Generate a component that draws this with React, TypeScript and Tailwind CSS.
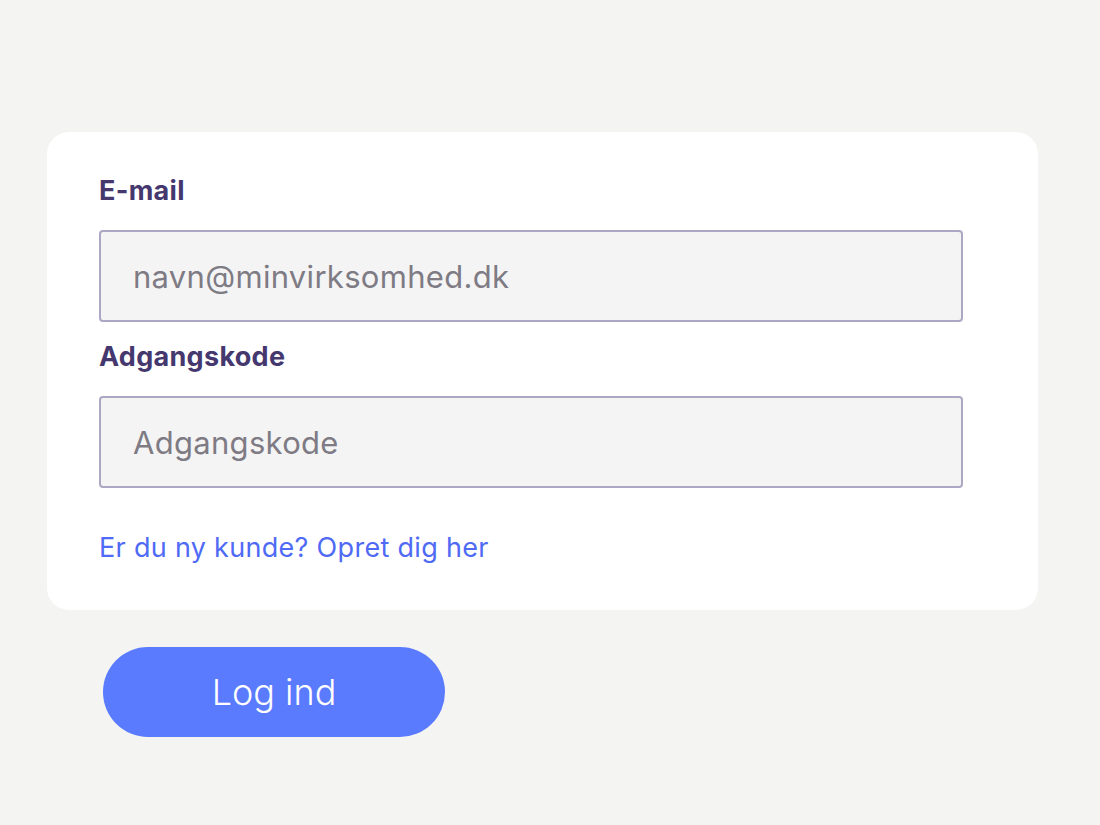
import React from 'react'

const font = { fontFamily: 'Inter, "Open Sans", sans-serif' }

const Field = ({ label, placeholder, type }: { label: string; placeholder: string; type: string }) => (
  <div>
    <label className="block text-[27px] font-bold leading-[30px] tracking-[0.3px] text-[#45386f]">{label}</label>
    <input
      type={type}
      placeholder={placeholder}
      className="mt-[24px] block h-[92px] w-[864px] rounded-[4px] border-2 border-[#aca7c2] bg-[#f4f4f4] px-[32px] text-[31px] tracking-[0.3px] text-[#55515a] outline-none placeholder:text-[#7e7b84]"
    />
  </div>
)

const App: React.FC = () => {
  return (
    <div className="min-h-[825px] w-full bg-[#f4f4f2] pt-[132px] pl-[47px]" style={font}>
      <div className="w-[991px] rounded-[22px] bg-white pt-[44px] pb-[46px] pl-[52px]">
        <div className="flex flex-col gap-[20px]">
          <Field label="E-mail" placeholder="navn@minvirksomhed.dk" type="email" />
          <Field label="Adgangskode" placeholder="Adgangskode" type="password" />
        </div>
        <a href="#" className="mt-[44px] block text-[27px] leading-[32px] tracking-[0.3px] text-[#4f6af5]">
          Er du ny kunde? Opret dig her
        </a>
      </div>
      <button className="mt-[37px] ml-[56px] h-[90px] w-[342px] rounded-full bg-[#5b7bff] text-[36px] font-light text-white">
        Log ind
      </button>
    </div>
  )
}

export default App
